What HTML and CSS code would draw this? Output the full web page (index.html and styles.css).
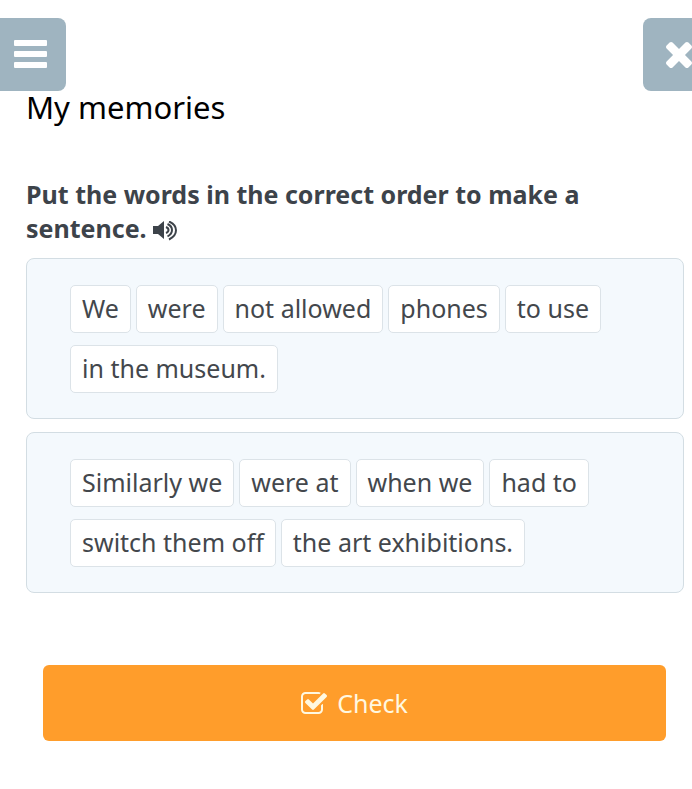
FILE: index.html
```html
<!DOCTYPE html>
<html lang="en">
<head>
<meta charset="utf-8">
<meta name="viewport" content="width=device-width, initial-scale=1">
<title>My memories</title>
<link rel="stylesheet" href="styles.css">
</head>
<body>
<header class="toolbar">
  <button class="tool" type="button" aria-label="Menu">
    <svg class="menu-icon" viewBox="0 0 33 28" aria-hidden="true"><rect width="33" height="6" rx="1"/><rect y="11" width="33" height="6" rx="1"/><rect y="22" width="33" height="6" rx="1"/></svg>
  </button>
  <button class="tool tool-close" type="button" aria-label="Close">
    <svg class="close-icon" viewBox="302 366 1188 1188" aria-hidden="true"><path d="M1490 1322q0 40-28 68l-136 136q-28 28-68 28t-68-28l-294-294-294 294q-28 28-68 28t-68-28l-136-136q-28-28-28-68t28-68l294-294-294-294q-28-28-28-68t28-68l136-136q28-28 68-28t68 28l294 294 294-294q28-28 68-28t68 28l136 136q28 28 28 68t-28 68l-294 294 294 294q28 28 28 68z"/></svg>
  </button>
</header>
<main class="lesson">
  <h1 class="title">My memories</h1>
  <h2 class="task">Put the words in the correct order to make a sentence. <button class="listen" type="button" aria-label="Listen"><svg class="sound-icon" viewBox="0 0 24 20" aria-hidden="true"><path class="speaker" d="M0 5h5l6-5v18l-6-5H0z"/><path class="wave" d="M13 6q2.500 1 2.500 3t-2.500 3M14.500 3q4.500 2 4.500 6t-4.500 6.500M16 .500q7 3 7 8.800t-7 9.200"/></svg></button></h2>
  <div class="sentence">
    <button class="word" type="button">We</button>
    <button class="word" type="button">were</button>
    <button class="word" type="button">not allowed</button>
    <button class="word" type="button">phones</button>
    <button class="word" type="button">to use</button>
    <button class="word" type="button">in the museum.</button>
  </div>
  <div class="sentence">
    <button class="word" type="button">Similarly we</button>
    <button class="word" type="button">were at</button>
    <button class="word" type="button">when we</button>
    <button class="word" type="button">had to</button>
    <button class="word" type="button">switch them off</button>
    <button class="word" type="button">the art exhibitions.</button>
  </div>
  <button class="check" type="button">
    <svg class="check-icon" viewBox="64 128 1664 1408" aria-hidden="true"><path d="M1472 930v318q0 119-84.500 203.500t-203.500 84.500h-832q-119 0-203.500-84.500t-84.500-203.500v-832q0-119 84.500-203.500t203.500-84.500h832q63 0 117 25 15 7 18 23 3 17-9 29l-49 49q-10 10-23 10-3 0-9-2-23-6-45-6h-832q-66 0-113 47t-47 113v832q0 66 47 113t113 47h832q66 0 113-47t47-113v-254q0-13 9-22l64-64q10-10 23-10 6 0 12 3 20 8 20 29zm231-489l-814 814q-24 24-57 24t-57-24l-430-430q-24-24-24-57t24-57l110-110q24-24 57-24t57 24l263 263 647-647q24-24 57-24t57 24l110 110q24 24 24 57t-24 57z"/></svg>
    Check
  </button>
</main>
</body>
</html>
```
FILE: styles.css
```css
* {
  box-sizing: border-box;
}

body {
  margin: 0;
  background: #fff;
  color: #3d434a;
  font-family: "Noto Sans", "Open Sans", sans-serif;
  font-size: 25px;
  overflow-x: hidden;
}

button {
  margin: 0;
  border: 0;
  color: inherit;
  font: inherit;
  cursor: pointer;
}

svg {
  display: block;
  fill: currentColor;
}

.toolbar {
  display: flex;
  justify-content: space-between;
  padding-top: 18px;
  overflow: hidden;
}

.tool {
  display: flex;
  align-items: center;
  height: 73px;
  padding: 0 19px 2px 14px;
  border-radius: 0 8px 8px 0;
  background: #9fb4c0;
  color: #fff;
}

.tool-close {
  padding: 0 0 0 23px;
  border-radius: 8px 0 0 8px;
}

.menu-icon {
  width: 33px;
  height: 28px;
}

.close-icon {
  width: 26px;
  height: 26px;
}

.lesson {
  padding: 0 8px 48px 26px;
}

.title {
  margin: 0 0 54px;
  color: #000;
  font-size: 31px;
  font-weight: 400;
  line-height: 32px;
}

.task {
  margin: 0 0 13px;
  font-size: 25px;
  font-weight: 700;
  line-height: 34px;
}

.listen {
  display: inline-block;
  padding: 0;
  background: none;
  vertical-align: middle;
}

.sound-icon {
  width: 24px;
  height: 20px;
}

.wave {
  fill: none;
  stroke: currentColor;
  stroke-width: 2;
}

.sentence {
  display: flex;
  flex-wrap: wrap;
  gap: 12px 5px;
  margin-bottom: 13px;
  padding: 26px 43px 25px;
  border: 1px solid #d3dde3;
  border-radius: 8px;
  background: #f4f9fd;
}

.word {
  height: 48px;
  padding: 0 11px 2px;
  border: 1px solid #dce3e8;
  border-radius: 5px;
  background: #fff;
  color: #43474c;
  line-height: 34px;
}

.check {
  display: flex;
  align-items: center;
  justify-content: center;
  gap: 10px;
  width: calc(100% - 35px);
  height: 76px;
  margin: 72px 18px 0 17px;
  padding-bottom: 2px;
  border-radius: 6px;
  background: #ff9d2b;
  color: #fff8e0;
}

.check-icon {
  width: 26px;
  height: 22px;
}
```
